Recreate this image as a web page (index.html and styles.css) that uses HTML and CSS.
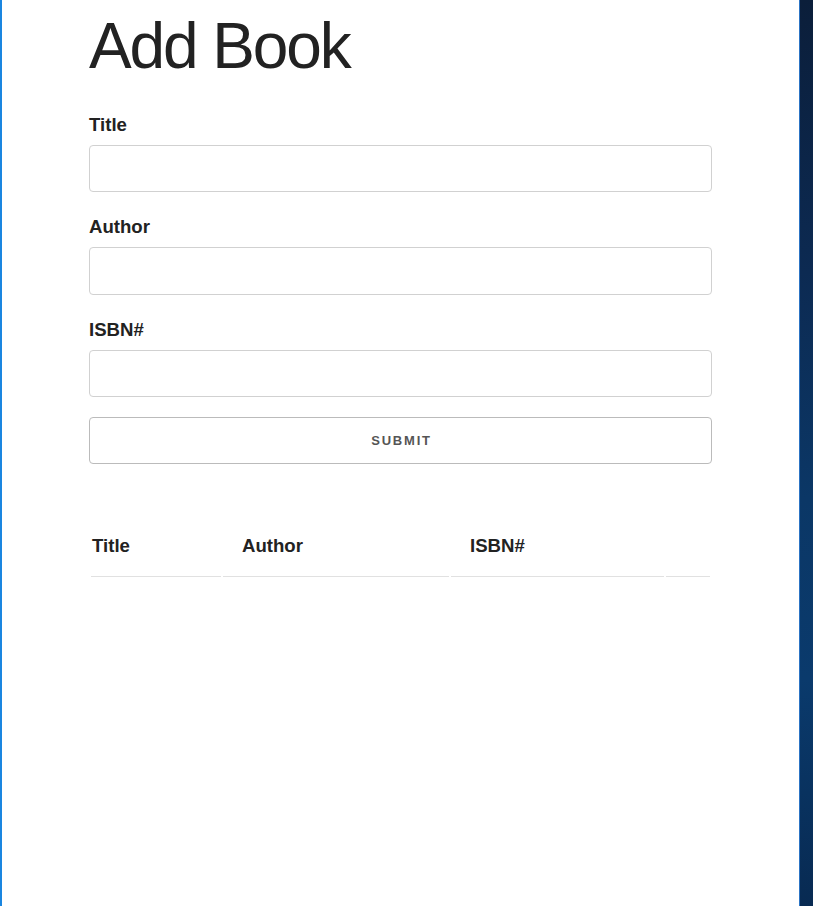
FILE: index.html
```html
<!DOCTYPE html>
<html lang="en">
<head>
<meta charset="utf-8">
<title>Add Book</title>
<link rel="stylesheet" href="styles.css">
</head>
<body>
<div class="edge-left"></div>
<main class="page">
  <div class="container">
    <h1 class="heading">Add Book</h1>
    <form class="book-form">
      <label class="field-label" for="title">Title</label>
      <input class="field-input" id="title" type="text">
      <label class="field-label" for="author">Author</label>
      <input class="field-input" id="author" type="text">
      <label class="field-label" for="isbn">ISBN#</label>
      <input class="field-input" id="isbn" type="text">
      <button class="submit-btn" type="button">Submit</button>
    </form>
    <table class="book-table">
      <colgroup>
        <col class="col-title">
        <col class="col-author">
        <col class="col-isbn">
        <col class="col-actions">
      </colgroup>
      <thead>
        <tr>
          <th>Title</th>
          <th>Author</th>
          <th>ISBN#</th>
          <th></th>
        </tr>
      </thead>
      <tbody></tbody>
    </table>
  </div>
</main>
<div class="edge-line"></div>
<div class="edge-right"></div>
</body>
</html>
```
FILE: styles.css
```css
* { box-sizing: border-box; }
html, body { height: 100%; }
body {
  margin: 0;
  display: flex;
  font-family: "Liberation Sans", Arial, sans-serif;
  color: #222;
  background: #fff;
}
.edge-left {
  width: 2px;
  flex: none;
  background: #1a86e0;
}
.page {
  flex: 1;
  background: #fff;
}
.edge-line {
  width: 1px;
  flex: none;
  background: #2c74c4;
}
.edge-right {
  width: 13px;
  flex: none;
  background: linear-gradient(180deg, #0b1e3a 0%, #0c2a52 30%, #0b3766 55%, #0a3a6c 75%, #082a52 100%);
}
.container {
  width: 623px;
  margin: 0 auto;
}
.heading {
  margin: 7.5px 0 26.3px;
  font-size: 64px;
  font-weight: 300;
  line-height: 1.2;
  letter-spacing: -2.1px;
  color: #222;
}
.book-form {
  display: flex;
  flex-direction: column;
}
.field-label {
  font-size: 18.6px;
  font-weight: bold;
  line-height: 27px;
  margin-bottom: 7px;
}
.field-input {
  height: 47.5px;
  margin: 0 0 21px;
  border: 1px solid #d1d1d1;
  border-radius: 4px;
  background: #fff;
  padding: 6px 10px;
  font: inherit;
}
.submit-btn {
  height: 47px;
  margin-top: -0.8px;
  border: 1px solid #bbb;
  border-radius: 4px;
  background: transparent;
  color: #555;
  font-family: "Liberation Sans", Arial, sans-serif;
  font-size: 13px;
  font-weight: bold;
  letter-spacing: 1.8px;
  text-indent: 2px;
  text-transform: uppercase;
  padding: 0;
}
.book-table {
  margin-top: 55px;
  width: 623px;
  table-layout: fixed;
  border-collapse: separate;
  border-spacing: 2px;
}
.col-title { width: 130px; }
.col-author { width: 226px; }
.col-isbn { width: 213px; }
.col-actions { width: 44px; }
.book-table th {
  text-align: left;
  font-size: 18.6px;
  font-weight: bold;
  line-height: 27px;
  padding: 11px 15px 17px 19px;
  border-bottom: 1px solid #e1e1e1;
}
.book-table th:first-child { padding-left: 1px; }
```
